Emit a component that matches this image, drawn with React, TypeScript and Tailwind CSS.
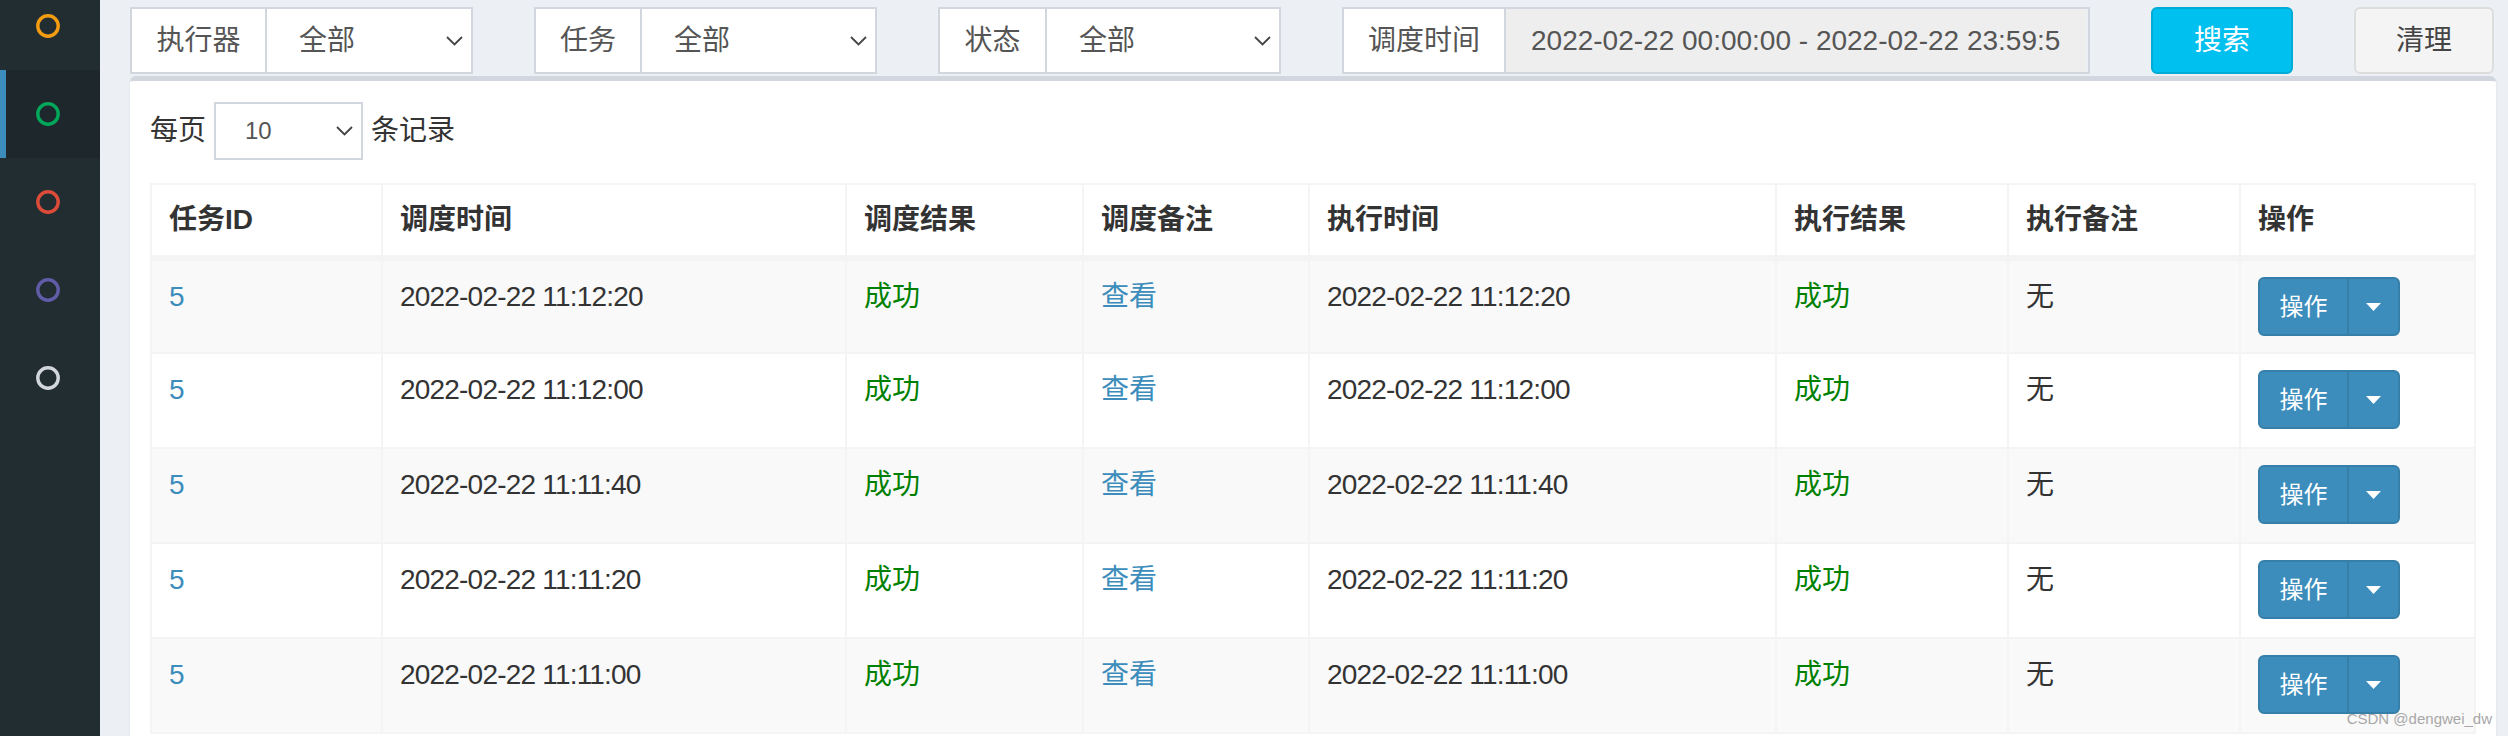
import React from "react"

const menuColors = ["#f39c12", "#00a65a", "#dd4b39", "#605ca8", "#d2d6de"]

const columns = [
  { title: "任务ID", width: 231 },
  { title: "调度时间", width: 464 },
  { title: "调度结果", width: 237 },
  { title: "调度备注", width: 226 },
  { title: "执行时间", width: 467 },
  { title: "执行结果", width: 232 },
  { title: "执行备注", width: 232 },
  { title: "操作", width: 235 },
]

const logs = [
  "2022-02-22 11:12:20",
  "2022-02-22 11:12:00",
  "2022-02-22 11:11:40",
  "2022-02-22 11:11:20",
  "2022-02-22 11:11:00",
]

function Ring({ color }: { color: string }) {
  return (
    <svg width="24" height="24" viewBox="0 0 24 24">
      <circle cx="12" cy="12" r="10.2" fill="none" stroke={color} strokeWidth="3.4" />
    </svg>
  )
}

function Chevron() {
  return (
    <svg width="17" height="10" viewBox="0 0 17 10" className="shrink-0">
      <polyline points="1,1 8.5,8.5 16,1" fill="none" stroke="#444" strokeWidth="1.8" />
    </svg>
  )
}

function FilterSelect({ label, labelWidth }: { label: string; labelWidth: number }) {
  return (
    <div className="flex h-[67px] w-[343px] shrink-0 border-2 border-[#d2d6de] bg-white text-[#555]">
      <div
        className="flex items-center justify-center border-r-2 border-[#d2d6de]"
        style={{ width: labelWidth }}
      >
        {label}
      </div>
      <div className="flex flex-1 items-center justify-between pl-[32px] pr-[8px]">
        <span>全部</span>
        <Chevron />
      </div>
    </div>
  )
}

function Caret() {
  return (
    <svg width="15" height="8" viewBox="0 0 15 8">
      <polygon points="0,0 15,0 7.5,8" fill="#fff" />
    </svg>
  )
}

export default function App() {
  return (
    <div className="relative flex h-[736px] w-[2508px] overflow-hidden bg-[#ecf0f5] font-['Liberation_Sans','Noto_Sans_CJK_SC',sans-serif] text-[28px] leading-[40px] text-[#333]">
      {/* Sidebar */}
      <aside className="w-[100px] shrink-0 bg-[#222d32]">
        <ul className="-mt-[18px]">
          {menuColors.map((color, i) => (
            <li
              key={color}
              className={`flex h-[88px] items-center ${
                i === 1 ? "border-l-[6px] border-[#3c8dbc] bg-[#1e282c] pl-[30px]" : "pl-[36px]"
              }`}
            >
              <Ring color={color} />
            </li>
          ))}
        </ul>
      </aside>

      {/* Content */}
      <main className="min-w-0 flex-1">
        <div className="flex gap-[61px] pl-[30px] pt-[7px]">
          <FilterSelect label="执行器" labelWidth={135} />
          <FilterSelect label="任务" labelWidth={106} />
          <FilterSelect label="状态" labelWidth={107} />
          <div className="flex h-[67px] w-[748px] shrink-0 border-2 border-[#d2d6de] text-[#555]">
            <div className="flex w-[162px] shrink-0 items-center justify-center border-r-2 border-[#d2d6de] bg-white">
              调度时间
            </div>
            <div className="flex w-[580px] shrink-0 items-center bg-[#eeeeee] px-[25px]">
              <div className="w-[530px] overflow-hidden whitespace-nowrap">
                2022-02-22 00:00:00 - 2022-02-22 23:59:59
              </div>
            </div>
          </div>
          <button className="flex h-[67px] w-[142px] shrink-0 items-center justify-center rounded-[6px] border-2 border-[#00acd6] bg-[#00c0ef] text-white">
            搜索
          </button>
          <button className="flex h-[67px] w-[140px] shrink-0 items-center justify-center rounded-[6px] border-2 border-[#dddddd] bg-[#f4f4f4] text-[#444]">
            清理
          </button>
        </div>

        <section className="ml-[30px] mt-[2px] w-[2366px] rounded-[6px] border-t-[5px] border-[#d2d6de] bg-white px-[20px] pt-[21px] pb-[20px] shadow-[0_2px_2px_rgba(0,0,0,0.1)]">
          <div className="flex items-center">
            <span>每页</span>
            <div className="mx-[8px] flex h-[58px] w-[149px] items-center justify-between border-2 border-[#d2d6de] pl-[29px] pr-[8px] text-[24px] text-[#555]">
              <span>10</span>
              <Chevron />
            </div>
            <span>条记录</span>
          </div>

          <table className="mt-[23px] w-[2324px] table-fixed border-collapse border-2 border-[#f4f4f4]">
            <colgroup>
              {columns.map((c) => (
                <col key={c.title} style={{ width: c.width }} />
              ))}
            </colgroup>
            <thead>
              <tr>
                {columns.map((c) => (
                  <th
                    key={c.title}
                    className="h-[74px] border-2 border-b-[6px] border-[#f4f4f4] px-[17px] text-left align-middle font-bold"
                  >
                    {c.title}
                  </th>
                ))}
              </tr>
            </thead>
            <tbody>
              {logs.map((time, i) => (
                <tr key={time} className={i % 2 === 0 ? "bg-[#f9f9f9]" : "bg-white"}>
                  <td className="h-[95px] border-2 border-[#f4f4f4] px-[17px] pt-[16px] align-top text-[#3c8dbc]">
                    5
                  </td>
                  <td className="border-2 border-[#f4f4f4] px-[17px] pt-[16px] align-top tracking-[-0.8px]">
                    {time}
                  </td>
                  <td className="border-2 border-[#f4f4f4] px-[17px] pt-[16px] align-top text-[#008000]">
                    成功
                  </td>
                  <td className="border-2 border-[#f4f4f4] px-[17px] pt-[16px] align-top text-[#3c8dbc]">
                    查看
                  </td>
                  <td className="border-2 border-[#f4f4f4] px-[17px] pt-[16px] align-top tracking-[-0.8px]">
                    {time}
                  </td>
                  <td className="border-2 border-[#f4f4f4] px-[17px] pt-[16px] align-top text-[#008000]">
                    成功
                  </td>
                  <td className="border-2 border-[#f4f4f4] px-[17px] pt-[16px] align-top">无</td>
                  <td className="border-2 border-[#f4f4f4] px-[17px] pt-[16px] align-top">
                    <div className="inline-flex h-[59px] overflow-hidden rounded-[6px] border-2 border-[#367fa9] bg-[#3c8dbc] text-[24px] text-white">
                      <span className="flex w-[89px] items-center justify-center border-r-2 border-[#367fa9]">
                        操作
                      </span>
                      <span className="flex w-[49px] items-center justify-center">
                        <Caret />
                      </span>
                    </div>
                  </td>
                </tr>
              ))}
            </tbody>
          </table>
        </section>
      </main>

      <div className="absolute bottom-[8px] right-[16px] text-[15px] leading-[18px] text-[#a8a8a8]">
        CSDN @dengwei_dw
      </div>
    </div>
  )
}
